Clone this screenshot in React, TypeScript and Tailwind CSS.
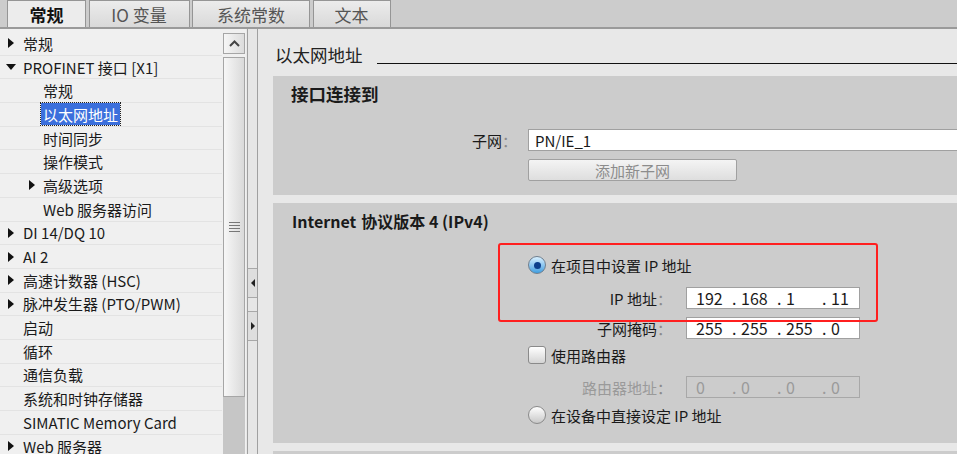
import React from 'react';

type TreeItem = { label: string; level: 0 | 1; arrow?: 'right' | 'down'; selected?: boolean };

const tree: TreeItem[] = [
    { label: '常规', level: 0, arrow: 'right' },
    { label: 'PROFINET 接口 [X1]', level: 0, arrow: 'down' },
    { label: '常规', level: 1 },
    { label: '以太网地址', level: 1, selected: true },
    { label: '时间同步', level: 1 },
    { label: '操作模式', level: 1 },
    { label: '高级选项', level: 1, arrow: 'right' },
    { label: 'Web 服务器访问', level: 1 },
    { label: 'DI 14/DQ 10', level: 0, arrow: 'right' },
    { label: 'AI 2', level: 0, arrow: 'right' },
    { label: '高速计数器 (HSC)', level: 0, arrow: 'right' },
    { label: '脉冲发生器 (PTO/PWM)', level: 0, arrow: 'right' },
    { label: '启动', level: 0 },
    { label: '循环', level: 0 },
    { label: '通信负载', level: 0 },
    { label: '系统和时钟存储器', level: 0 },
    { label: 'SIMATIC Memory Card', level: 0 },
    { label: 'Web 服务器', level: 0, arrow: 'right' },
];

const tabs = [
    { label: '常规', w: 'w-[79px]', active: true },
    { label: 'IO 变量', w: 'w-[101px]' },
    { label: '系统常数', w: 'w-[118px]' },
    { label: '文本', w: 'w-[78px]' },
];

function Arrow({ dir }: { dir: 'right' | 'down' }) {
    if (dir === 'down') {
        return (
            <svg width="10" height="6" viewBox="0 0 10 6">
                <path d="M0 0H10L5 6Z" fill="#111" />
            </svg>
        );
    }
    return (
        <svg width="6" height="10" viewBox="0 0 6 10">
            <path d="M0 0L6 5L0 10Z" fill="#111" />
        </svg>
    );
}

function Radio({ checked }: { checked?: boolean }) {
    return checked ? (
        <div className="w-[18px] h-[18px] rounded-full border border-[#6f7f8f] bg-gradient-to-b from-[#d8f0ff] to-[#3c9ee0] flex items-center justify-center">
            <div className="w-[7px] h-[7px] rounded-full bg-[#0d3f8c]" />
        </div>
    ) : (
        <div className="w-[18px] h-[18px] rounded-full border border-[#8a8a8a] bg-gradient-to-b from-[#ffffff] to-[#c8c8c8]" />
    );
}

function IpField({ parts, disabled }: { parts: string[]; disabled?: boolean }) {
    return (
        <div
            className={`w-[174px] h-[22px] shrink-0 flex items-center pl-[9px] text-[16px] border ${
                disabled ? 'border-[#a8a8a8] text-[#9a9a9a]' : 'bg-white border-[#a0a0a0] text-[#1a1a1a]'
            }`}
        >
            {parts.map((p, i) => (
                <div key={i} className="flex">
                    <span className="w-[36px]">{p}</span>
                    {i < 3 && <span className="w-[9px]">.</span>}
                </div>
            ))}
        </div>
    );
}

function LabelCol({ text, disabled }: { text: string; disabled?: boolean }) {
    return (
        <div className={`w-[413px] shrink-0 text-right pr-[14px] ${disabled ? 'text-[#9a9a9a]' : 'text-[#1a1a1a]'}`}>
            {text}
            <span className="text-[#8a8a8a]">：</span>
        </div>
    );
}

export default function App() {
    return (
        <div className="w-[957px] h-[454px] overflow-hidden bg-[#e8e8e8] font-['Noto_Sans_CJK_SC','Noto_Sans',sans-serif] text-[15px] leading-none text-[#1a1a1a] flex flex-col">
            {/* tabs */}
            <div className="h-[29px] bg-[#cccccc] border-b-2 border-[#9a9a9a] flex items-end pl-[7px] gap-[2.5px] shrink-0">
                {tabs.map((t) => (
                    <div
                        key={t.label}
                        className={`${t.w} h-[27px] flex items-center justify-center border border-b-0 border-[#959595] text-[17px] ${
                            t.active
                                ? 'bg-[#ececec] font-bold text-[#111]'
                                : 'bg-gradient-to-b from-[#ececec] to-[#d9d9d9] text-[#555]'
                        }`}
                    >
                        {t.label}
                    </div>
                ))}
            </div>

            <div className="flex flex-1 min-h-0">
                {/* tree */}
                <div className="w-[222px] bg-[#f0f0f0] pt-[3px] shrink-0">
                    {tree.map((item, i) => (
                        <div key={i} className="flex h-[23.7px] items-center border-b border-[#e3e3e3]">
                            {item.level === 0 ? (
                                <div className={`w-[23px] flex items-center ${item.arrow === 'down' ? 'pl-[6px]' : 'pl-[8px]'}`}>
                                    {item.arrow && <Arrow dir={item.arrow} />}
                                </div>
                            ) : (
                                <div className="w-[41px] pl-[29px] flex items-center">
                                    {item.arrow && <Arrow dir={item.arrow} />}
                                </div>
                            )}
                            {item.selected ? (
                                <span className="h-[22px] px-[2px] flex items-center bg-[#3b6fdc] text-white outline outline-1 outline-dotted outline-[#222]">
                                    {item.label}
                                </span>
                            ) : (
                                <span className={item.level === 1 ? 'pl-[2px]' : ''}>{item.label}</span>
                            )}
                        </div>
                    ))}
                </div>

                {/* scrollbar */}
                <div className="w-[24px] flex flex-col px-[1px] pt-[4px] bg-[#f0f0f0] shrink-0">
                    <div className="h-[21px] border border-[#a6a6a6] bg-gradient-to-r from-[#f6f6f6] to-[#dcdcdc] flex items-center justify-center">
                        <svg width="11" height="7" viewBox="0 0 11 7">
                            <path d="M1 6L5.5 1.5L10 6" stroke="#444" strokeWidth="2" fill="none" />
                        </svg>
                    </div>
                    <div className="mt-[3px] h-[340px] border border-[#a6a6a6] bg-gradient-to-r from-[#f7f7f7] to-[#dadada] flex flex-col items-center justify-center gap-[2px]">
                        <div className="w-[11px] h-px bg-[#777]" />
                        <div className="w-[11px] h-px bg-[#777]" />
                        <div className="w-[11px] h-px bg-[#777]" />
                        <div className="w-[11px] h-px bg-[#777]" />
                    </div>
                    <div className="flex-1 bg-[#c6c6c6]" />
                </div>

                {/* splitter */}
                <div className="w-[11px] bg-[#e6e6e6] border-l border-r border-[#a0a0a0] ml-[1px] flex flex-col shrink-0">
                    <div className="h-[239px]" />
                    <div className="h-[30px] border-y border-[#a8a8a8] bg-[#dedede] flex items-center justify-center">
                        <svg width="4" height="8" viewBox="0 0 4 8">
                            <path d="M4 0L0 4L4 8Z" fill="#222" />
                        </svg>
                    </div>
                    <div className="h-[13px]" />
                    <div className="h-[30px] border-y border-[#a8a8a8] bg-[#dedede] flex items-center justify-center">
                        <svg width="4" height="8" viewBox="0 0 4 8">
                            <path d="M0 0L4 4L0 8Z" fill="#222" />
                        </svg>
                    </div>
                </div>

                {/* properties */}
                <div className="flex-1 min-w-0 pl-[15px] flex flex-col">
                    <div className="mt-[14px] h-[24px] flex items-center pl-[2px] shrink-0">
                        <span className="text-[17.5px] text-[#222]">以太网地址</span>
                        <div className="flex-1 h-[1.5px] bg-[#111] ml-[14px] self-end mb-[3px]" />
                    </div>

                    {/* 接口连接到 */}
                    <div className="mt-[9px] h-[119px] bg-[#cccccc] shrink-0">
                        <div className="h-[36px] flex items-center pl-[18px] font-bold text-[17.5px]">接口连接到</div>
                        <div className="mt-[17px] h-[22px] flex items-center">
                            <div className="w-[255px] shrink-0 text-right pr-[11px]">
                                子网<span className="text-[#8a8a8a]">：</span>
                            </div>
                            <div className="w-[440px] shrink-0 h-[22px] bg-white border border-[#a0a0a0] flex items-center pl-[6px] text-[15px]">
                                PN/IE_1
                            </div>
                        </div>
                        <div className="mt-[8px] ml-[255px] w-[209px] h-[22px] border border-[#a0a0a0] rounded-[2px] bg-gradient-to-b from-[#f4f4f4] to-[#dedede] flex items-center justify-center text-[#8c8c8c]">
                            添加新子网
                        </div>
                    </div>

                    {/* IPv4 */}
                    <div className="relative mt-[8px] h-[240px] bg-[#cccccc] shrink-0">
                        <div className="h-[36px] flex items-center pl-[19px] text-[16px] font-semibold">
                            Internet <span className="ml-[5px] font-bold">协议版本 4 (IPv4)</span>
                        </div>
                        <div className="mt-[15px] h-[22px] flex items-center pl-[255px] gap-[5px]">
                            <Radio checked />
                            <span>在项目中设置 IP 地址</span>
                        </div>
                        <div className="mt-[11px] h-[22px] flex items-center">
                            <LabelCol text="IP 地址" />
                            <IpField parts={['192', '168', '1', '11']} />
                        </div>
                        <div className="mt-[8px] h-[22px] flex items-center">
                            <LabelCol text="子网掩码" />
                            <IpField parts={['255', '255', '255', '0']} />
                        </div>
                        <div className="mt-[5px] h-[22px] flex items-center pl-[255px] gap-[5px]">
                            <div className="w-[18px] h-[18px] rounded-[3px] border border-[#8a8a8a] bg-gradient-to-b from-[#ffffff] to-[#d4d4d4]" />
                            <span>使用路由器</span>
                        </div>
                        <div className="mt-[10px] h-[22px] flex items-center">
                            <LabelCol text="路由器地址" disabled />
                            <IpField parts={['0', '0', '0', '0']} disabled />
                        </div>
                        <div className="mt-[6px] h-[22px] flex items-center pl-[255px] gap-[5px]">
                            <Radio />
                            <span>在设备中直接设定 IP 地址</span>
                        </div>

                        {/* highlight box */}
                        <div className="absolute left-[225px] top-[40px] w-[380px] h-[79px] border-2 border-[#ff1f1f] rounded-[3px]" />
                    </div>

                    <div className="mt-[8px] h-[20px] bg-[#cccccc] shrink-0" />
                </div>
            </div>
        </div>
    );
}
